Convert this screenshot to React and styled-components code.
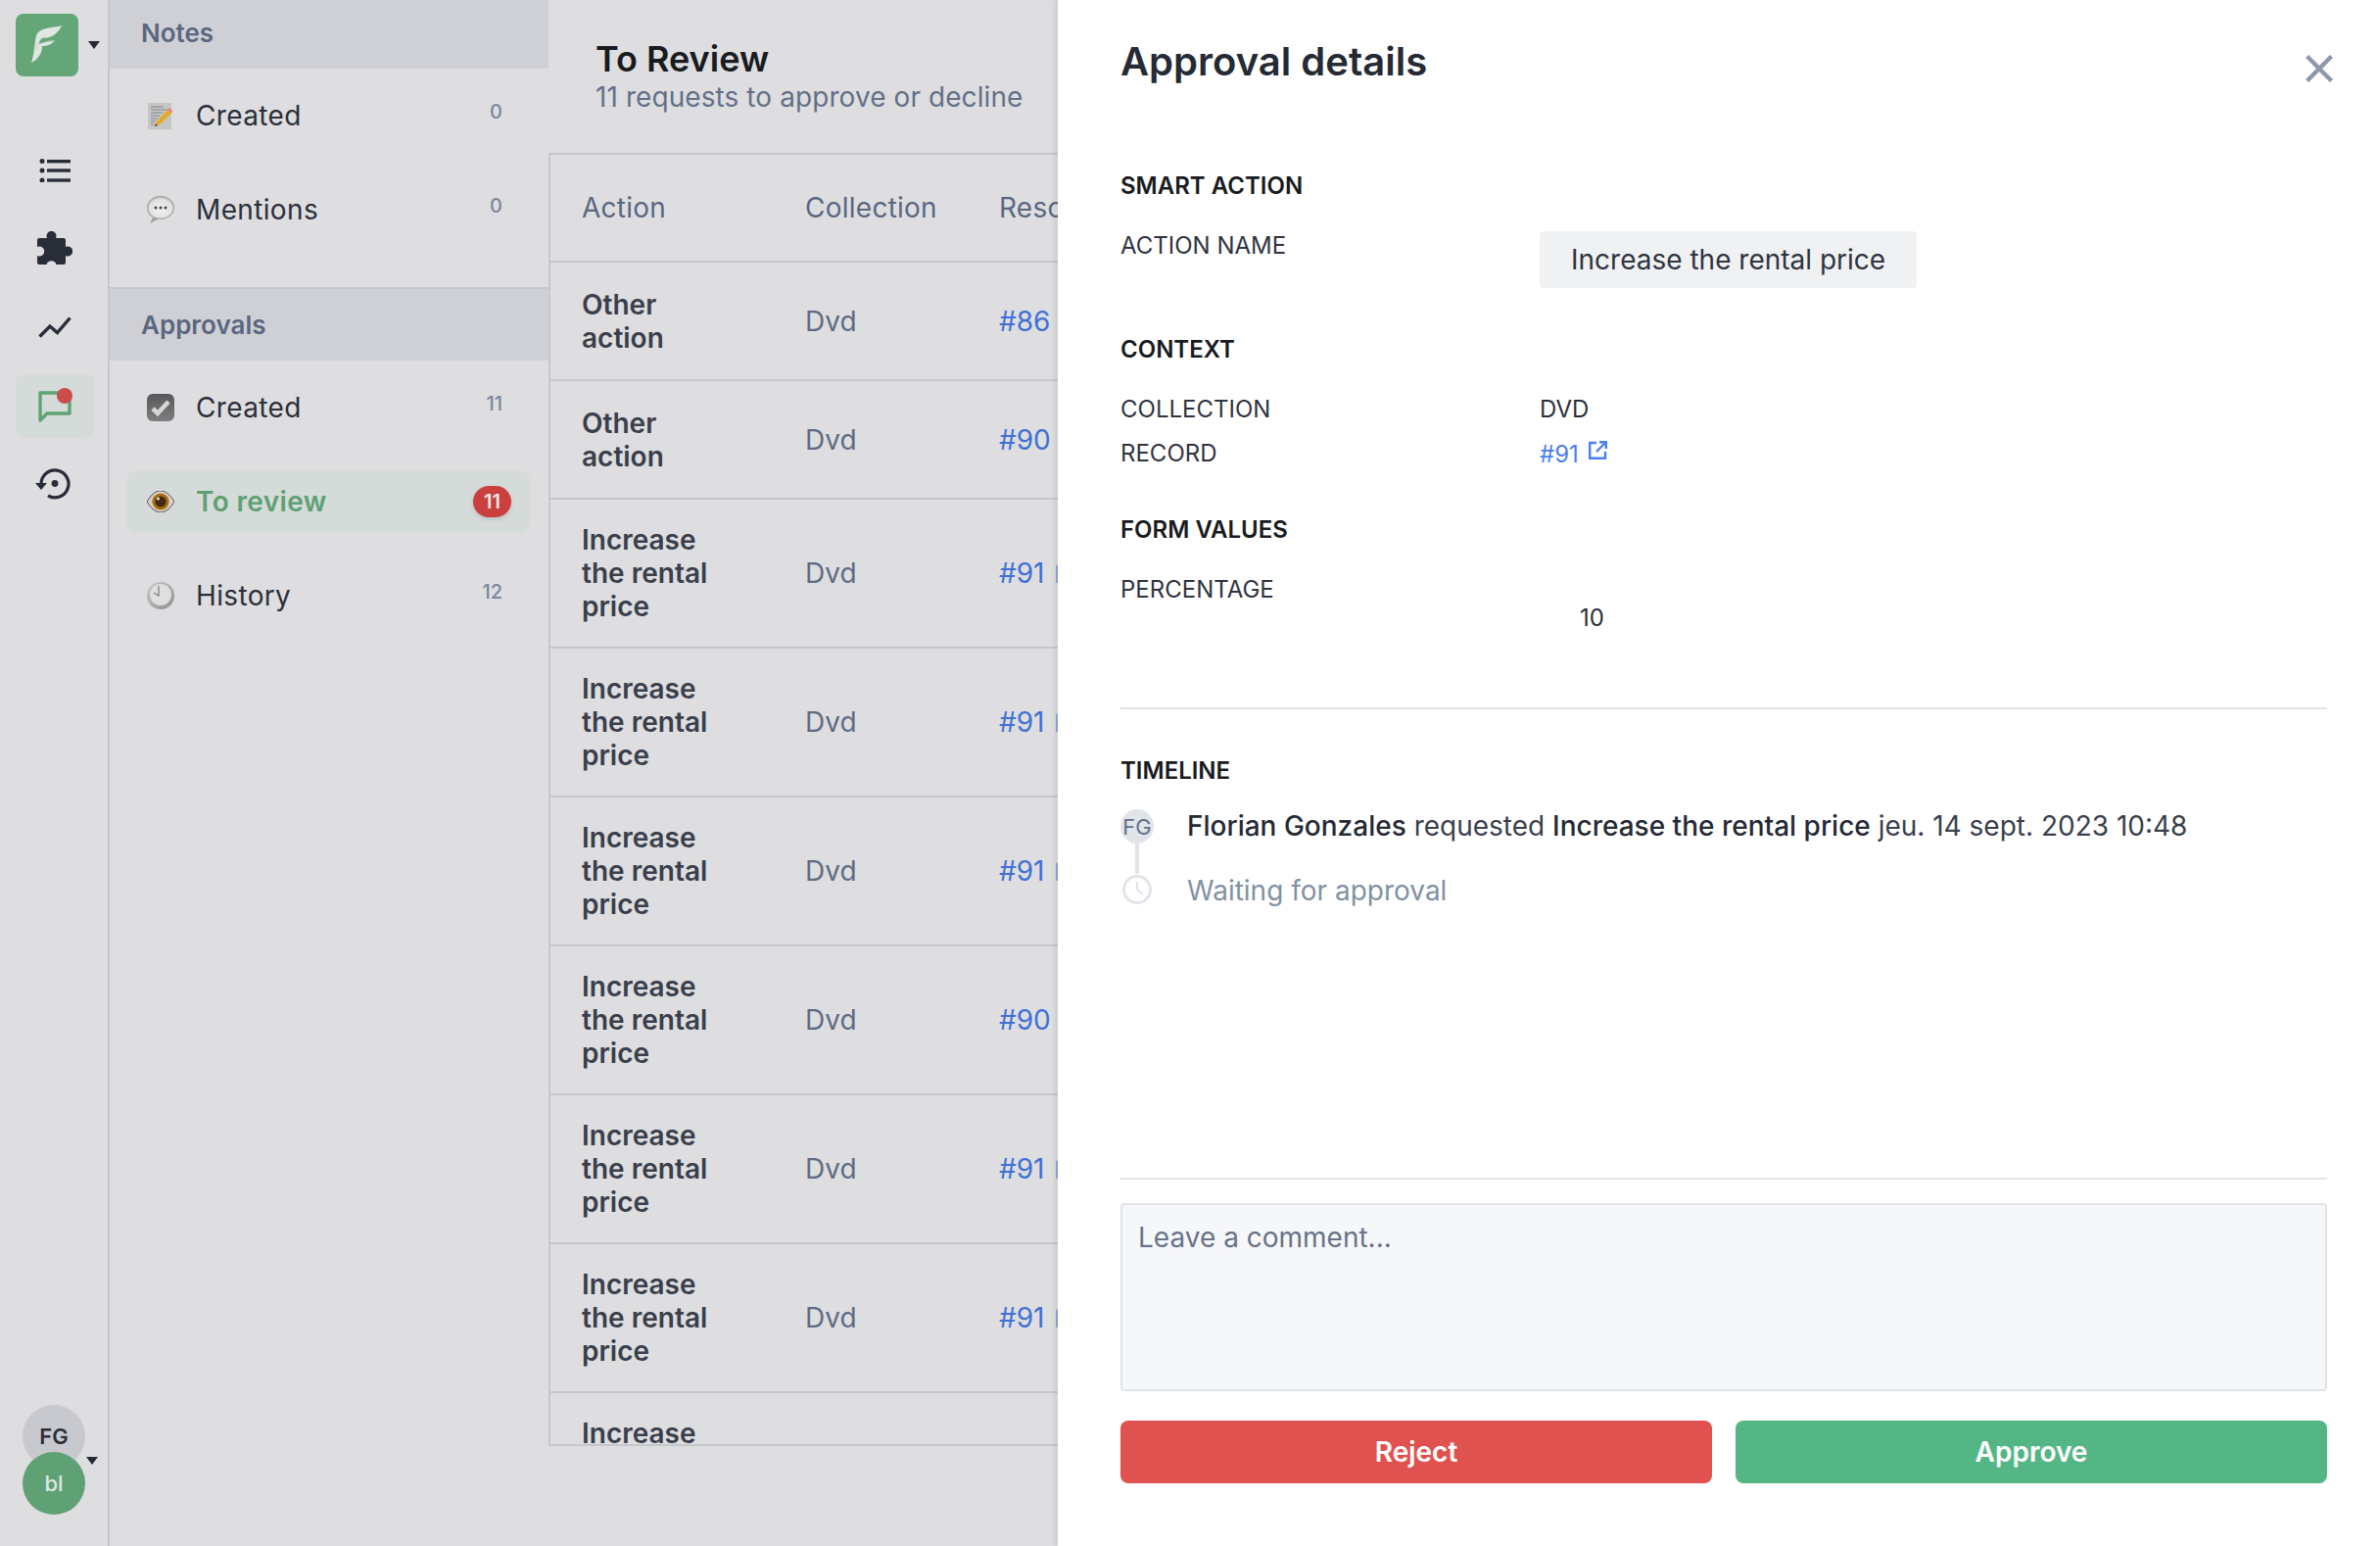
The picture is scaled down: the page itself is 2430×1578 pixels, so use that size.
import React from "react";
import styled, { createGlobalStyle } from "styled-components";

const Global = createGlobalStyle`
  html, body { margin: 0; padding: 0; background: #fff; }
  * { box-sizing: border-box; }
  body { font-family: Inter, "Noto Sans", sans-serif; }
`;

const Page = styled.div`
  display: flex;
  width: 2430px;
  height: 1578px;
  overflow: hidden;
`;

const Rail = styled.nav`
  display: flex;
  flex-direction: column;
  flex: 0 0 112px;
  background: #dedee0;
  border-right: 2px solid #c6c6ce;
  padding: 14px 0 32px 16px;
`;
const LogoRow = styled.div`
  display: flex;
  align-items: center;
  gap: 10px;
  margin-bottom: 64px;
`;
const Logo = styled.div`
  width: 64px;
  height: 64px;
  border-radius: 8px;
  background: #64a678;
  flex: none;
`;
const Caret = styled.span`
  display: block;
  width: 0;
  height: 0;
  border-left: 6.5px solid transparent;
  border-right: 6.5px solid transparent;
  border-top: 8px solid #262a35;
`;
const RailNav = styled.div`
  display: flex;
  flex-direction: column;
  gap: 16px;
`;
const RailItem = styled.div`
  display: flex;
  align-items: center;
  justify-content: center;
  width: 80px;
  height: 64px;
  border-radius: 8px;
  color: #292d38;
  background: ${(p) => (p.$active ? "#d5dbd9" : "transparent")};
`;
const Avatars = styled.div`
  position: relative;
  margin: auto 0 0 7px;
  width: 64px;
`;
const Avatar = styled.div`
  display: flex;
  align-items: center;
  justify-content: center;
  width: 64px;
  height: 64px;
  border-radius: 50%;
  font-size: 22px;
  font-weight: ${(p) => (p.$green ? 500 : 600)};
  color: ${(p) => (p.$green ? "#dfe6e1" : "#2a2e39")};
  background: ${(p) => (p.$green ? "#5fa174" : "#c8c9ce")};
  margin-top: ${(p) => (p.$green ? "-16px" : "0")};
  position: relative;
`;
const AvatarCaret = styled(Caret)`
  position: absolute;
  left: 65px;
  top: 53px;
`;

const Sidebar = styled.aside`
  flex: 0 0 448px;
  background: #dedee0;
`;
const Band = styled.div`
  display: flex;
  align-items: center;
  height: ${(p) => (p.$bordered ? "75px" : "70px")};
  padding: 0 0 ${(p) => (p.$bordered ? "0" : "4px")} 32px;
  background: #cfd0d5;
  font-size: 26px;
  font-weight: 600;
  color: #5a6780;
  border-top: ${(p) => (p.$bordered ? "2px solid #c6c6ce" : "none")};
`;
const Rows = styled.div`
  display: flex;
  flex-direction: column;
  gap: 33px;
  padding: 16px 19px 0 17px;
  height: ${(p) => p.$h};
`;
const Row = styled.div`
  display: flex;
  align-items: center;
  height: 63px;
  padding: 0 20px 0 21px;
  border-radius: 10px;
  background: ${(p) => (p.$active ? "#d5dbd9" : "transparent")};
`;
const RowIcon = styled.span`
  display: flex;
  flex: 0 0 28px;
  justify-content: center;
`;
const RowLabel = styled.span`
  flex: 1;
  margin-left: 22px;
  font-size: 28px;
  letter-spacing: 0.35px;
  font-weight: ${(p) => (p.$active ? 600 : 400)};
  color: ${(p) => (p.$active ? "#5ea173" : "#2b2f3a")};
`;
const Count = styled.span`
  font-size: 20px;
  font-weight: 500;
  color: #7b869b;
  margin: 0 8px 8px 0;
`;
const Badge = styled.span`
  display: flex;
  align-items: center;
  justify-content: center;
  width: 39px;
  height: 32px;
  border-radius: 16px;
  font-size: 20px;
  font-weight: 600;
  color: #f1e6e6;
  background: #c9403f;
  box-shadow: 0 2px 4px rgba(0, 0, 0, 0.12);
  margin-right: -1px;
`;

const Main = styled.main`
  flex: 0 0 520px;
  display: flex;
  flex-direction: column;
  background: #dedee0;
  overflow: hidden;
`;
const MainHeader = styled.header`
  height: 158px;
  padding: 39px 0 0 48px;
  border-bottom: 2px solid #c6c6ce;
`;
const Title = styled.h1`
  margin: 0;
  font-size: 36px;
  line-height: 42px;
  font-weight: 600;
  color: #191b21;
`;
const Subtitle = styled.p`
  margin: 0;
  font-size: 28px;
  line-height: 36px;
  letter-spacing: 0.08px;
  color: #647088;
`;
const TableWrap = styled.div`
  height: 1318px;
  overflow: hidden;
  border-left: 2px solid #c6c6ce;
  border-bottom: 2px solid #c6c6ce;
`;
const Table = styled.table`
  border-collapse: separate;
  border-spacing: 0;
  table-layout: fixed;
  width: 794px;
`;
const Th = styled.th`
  width: ${(p) => p.$w}px;
  height: 110px;
  padding: 0 0 0 ${(p) => p.$pl}px;
  text-align: left;
  font-size: 28px;
  font-weight: 400;
  letter-spacing: 0.25px;
  color: #5a6780;
  border-bottom: 2px solid #c6c6ce;
  white-space: nowrap;
`;
const Td = styled.td`
  height: ${(p) => p.$h}px;
  padding: 0 0 0 ${(p) => p.$pl}px;
  font-size: 28px;
  line-height: 34px;
  border-bottom: 2px solid #c6c6ce;
  color: #5f6b82;
`;
const ActionName = styled.span`
  display: block;
  width: 132px;
  font-weight: 600;
  color: #3a3f4b;
`;
const RecordLink = styled.span`
  display: flex;
  align-items: center;
  gap: 12px;
  color: #4070d6;
`;

const Panel = styled.section`
  position: relative;
  flex: 0 0 1350px;
  display: flex;
  flex-direction: column;
  padding: 39px 54px 64px 64px;
  background: #fff;
  box-shadow: -3px 0 4px rgba(60, 60, 80, 0.1);
  font-size: 24px;
  color: #2b2f3a;
`;
const PanelTitle = styled.h2`
  margin: 0 0 88px;
  font-size: 40px;
  line-height: 48px;
  font-weight: 600;
  color: #252a35;
`;
const Close = styled.svg`
  position: absolute;
  top: 56px;
  right: 48px;
`;
const SectionTitle = styled.h3`
  margin: ${(p) => p.$mt || 0}px 0 ${(p) => p.$mb || 0}px;
  font-size: 24px;
  line-height: 30px;
  font-weight: 600;
  color: #191b21;
`;
const Field = styled.div`
  display: grid;
  grid-template-columns: 428px 1fr;
  margin-top: ${(p) => p.$mt || 0}px;
  line-height: 28px;
`;
const FieldLabel = styled.div`
  padding-top: ${(p) => p.$pt || 0}px;
  color: #2f3440;
`;
const Chip = styled.div`
  justify-self: start;
  display: flex;
  align-items: center;
  height: 58px;
  padding: 0 32px;
  border-radius: 4px;
  background: #f0f1f3;
  font-size: 28px;
  color: #2f3440;
`;
const FieldLink = styled.div`
  display: flex;
  align-items: flex-start;
  gap: 10px;
  padding-top: 1px;
  color: #4a7ff0;
`;
const NumberValue = styled.div`
  margin: 29px 0 0 41px;
`;
const Divider = styled.hr`
  margin: ${(p) => p.$mt}px 0 ${(p) => p.$mb}px;
  border: none;
  height: 2px;
  background: #e1e4e8;
`;
const Timeline = styled.div`
  display: grid;
  grid-template-columns: 34px 1fr;
  column-gap: 34px;
  margin-top: 24px;
  font-size: 28px;
  line-height: 34px;
`;
const FgDot = styled.div`
  display: flex;
  align-items: center;
  justify-content: center;
  width: 34px;
  height: 35px;
  border-radius: 50%;
  background: #e1e4e9;
  font-size: 22px;
  color: #64708a;
`;
const TimelineMarks = styled.div`
  display: flex;
  flex-direction: column;
  align-items: center;
`;
const Connector = styled.div`
  width: 4px;
  height: 31px;
  background: #e1e4e9;
`;
const TimelineText = styled.div`
  color: ${(p) => (p.$muted ? "#8291a5" : "#3a3f4b")};
  margin-top: ${(p) => p.$mt || 0}px;
  white-space: nowrap;
`;
const Strong = styled.span`
  font-weight: 500;
  color: #252a35;
`;
const Footer = styled.div`
  margin-top: auto;
`;
const Comment = styled.textarea`
  display: block;
  width: 100%;
  height: 192px;
  padding: 16px;
  border: 2px solid #e1e4e8;
  border-radius: 4px;
  background: #f6f7f9;
  font-family: inherit;
  font-size: 28px;
  line-height: 34px;
  resize: none;
  outline: none;
  &::placeholder { color: #687389; opacity: 1; }
`;
const Buttons = styled.div`
  display: grid;
  grid-template-columns: 1fr 1fr;
  gap: 24px;
  margin-top: 30px;
`;
const Button = styled.button`
  height: 64px;
  border: none;
  border-radius: 8px;
  font-family: inherit;
  font-size: 28px;
  font-weight: 600;
  color: #fff;
  background: ${(p) => (p.$kind === "reject" ? "#df524f" : "#55b685")};
`;

const FeatherF = () => (
  <svg width="64" height="64" viewBox="0 0 64 64">
    <path fill="#e0e6e1" d="M47 12C38 15 28 13 22 20c-3 6-2 18-6 30 6-3 10-8 11-15v-2c6 0 10-2 13-6-6 2-12 2-16 4 0-3 1-5 3-6 9 0 16-4 20-13z" />
    <path fill="none" stroke="#b9cfbd" strokeWidth="0.8" d="M21 38c1-7 3-12 9-15M24 31c4-2 8-2 12-4" />
  </svg>
);
const ListIcon = () => (
  <svg width="32" height="24" viewBox="0 0 32 24" fill="#292d38">
    <circle cx="3" cy="2.5" r="2.5" /><circle cx="3" cy="12" r="2.5" /><circle cx="3" cy="22" r="2.5" />
    <rect x="8" y="1" width="24" height="3.4" /><rect x="8" y="10.3" width="24" height="3.4" /><rect x="8" y="20.3" width="24" height="3.4" />
  </svg>
);
const PuzzleIcon = () => (
  <svg width="36" height="36" viewBox="0 0 36 36" fill="#292d38">
    <path d="M2 7H10A5 5 0 1 1 19 7H27A2 2 0 0 1 29 9V16A5 5 0 1 1 29 25V32A2 2 0 0 1 27 34H19.5A5.2 5.2 0 0 0 9.5 34H2A2 2 0 0 1 0 32V25A5 5 0 1 0 0 16V9A2 2 0 0 1 2 7Z" />
  </svg>
);
const ChartIcon = () => (
  <svg width="34" height="22" viewBox="0 0 34 22" fill="none" stroke="#292d38" strokeWidth="3.4">
    <path d="M1.5 20.5L12 10l7.5 6.5L32.5 1.5" />
  </svg>
);
const MessageIcon = () => (
  <svg width="36" height="36" viewBox="0 0 36 36">
    <path d="M3 5H33V26H10L3 33Z" fill="none" stroke="#5fa374" strokeWidth="3.4" strokeLinejoin="round" />
    <circle cx="28" cy="8" r="8" fill="#cc4c4c" />
  </svg>
);
const HistoryIcon = () => (
  <svg width="40" height="32" viewBox="0 0 40 32" fill="none">
    <path d="M6 16A14 14 0 1 1 13 28" stroke="#292d38" strokeWidth="3.2" />
    <path d="M0 15h12l-6 7z" fill="#292d38" />
    <circle cx="20" cy="15.5" r="3.4" fill="#292d38" />
  </svg>
);
const MemoIcon = () => (
  <svg width="26" height="28" viewBox="0 0 26 28">
    <rect x="0" y="1" width="24" height="27" fill="#c6c6c7" />
    <path stroke="#7f7f82" strokeWidth="0.9" d="M3 5h13M3 8h17M3 11h12M3 14h9M3 17h7M3 20h5M3 23h3" />
    <path fill="#e6aa2a" d="M7 25l2-5L20 8l4 4-12 11z" />
    <path fill="#3a3a3a" d="M7 25l1-3 2 2z" />
    <path fill="#d9838a" d="M20 8l2-2 3 3-1 3z" />
  </svg>
);
const BubbleIcon = () => (
  <svg width="28" height="28" viewBox="0 0 28 28">
    <defs>
      <radialGradient id="bub" cx="0.5" cy="0.55" r="0.6">
        <stop offset="0" stopColor="#f1f1f1" /><stop offset="0.7" stopColor="#e2e2e3" /><stop offset="1" stopColor="#a6a6a9" />
      </radialGradient>
    </defs>
    <path d="M7 20l-4 8 10-5z" fill="#a0a0a3" />
    <ellipse cx="14" cy="12" rx="13.4" ry="11.4" fill="url(#bub)" stroke="#a6a6a9" strokeWidth="1.2" />
    <circle cx="9" cy="12" r="1.5" fill="#444" /><circle cx="14" cy="12" r="1.5" fill="#444" /><circle cx="19" cy="12" r="1.5" fill="#444" />
  </svg>
);
const CheckIcon = () => (
  <svg width="28" height="28" viewBox="0 0 28 28">
    <defs>
      <linearGradient id="chk" x1="0" y1="0" x2="0" y2="1">
        <stop offset="0" stopColor="#58585a" /><stop offset="1" stopColor="#7e7e80" />
      </linearGradient>
    </defs>
    <rect width="28" height="28" rx="6" fill="url(#chk)" />
    <path d="M6 15l5 5L22 8" fill="none" stroke="#d6d6d7" strokeWidth="4.6" />
  </svg>
);
const EyeIcon = () => (
  <svg width="28" height="22" viewBox="0 0 28 22">
    <path d="M0 11C5 3 9 0 14 0s10 4 14 11c-4 7-9 11-14 11S4 18 0 11z" fill="#d8cfcf" stroke="#5a4a46" strokeWidth="1" />
    <circle cx="14" cy="11" r="8.6" fill="#a5720f" />
    <circle cx="14" cy="11" r="5.6" fill="#45280f" />
    <circle cx="11.5" cy="8" r="1.6" fill="#e8e0d8" />
  </svg>
);
const ClockEmoji = () => (
  <svg width="28" height="28" viewBox="0 0 28 28">
    <defs>
      <linearGradient id="clk" x1="0" y1="0" x2="1" y2="1">
        <stop offset="0" stopColor="#c8c8ca" /><stop offset="1" stopColor="#8f8f92" />
      </linearGradient>
    </defs>
    <circle cx="14" cy="14" r="14" fill="url(#clk)" />
    <circle cx="14" cy="13" r="11" fill="#dfdfe0" />
    <path d="M12 4v10l-5-3" fill="none" stroke="#7c7c80" strokeWidth="1.2" />
  </svg>
);
const ExternalIcon = ({ size = 19, color = "#4a7ff0", w = 2.4 }) => (
  <svg width={size} height={size} viewBox="0 0 19 19" fill="none" stroke={color} strokeWidth={w}>
    <path d="M8 2H1.2v15.8H17V11" />
    <path d="M8 11L17.5 1.5M11 1.2h6.8V8" />
  </svg>
);
const WaitClock = () => (
  <svg width="32" height="32" viewBox="0 0 32 32" fill="none" stroke="#e1e4e9" strokeWidth="3">
    <circle cx="16" cy="16" r="13.5" />
    <path d="M16 8v8l6 5" strokeWidth="2" />
  </svg>
);
const CloseIcon = () => (
  <Close width="28" height="28" viewBox="0 0 28 28" fill="none" stroke="#8d99a8" strokeWidth="4.4">
    <path d="M1.5 1.5l25 25M26.5 1.5l-25 25" />
  </Close>
);

const rows = [
  ["Other action", 2, "#86"],
  ["Other action", 2, "#90"],
  ["Increase the rental price", 3, "#91"],
  ["Increase the rental price", 3, "#91"],
  ["Increase the rental price", 3, "#91"],
  ["Increase the rental price", 3, "#90"],
  ["Increase the rental price", 3, "#91"],
  ["Increase the rental price", 3, "#91"],
  ["Increase the rental price", 3, "#91"],
];

export default function App() {
  return (
    <Page>
      <Global />
      <Rail>
        <LogoRow>
          <Logo><FeatherF /></Logo>
          <Caret />
        </LogoRow>
        <RailNav>
          <RailItem><ListIcon /></RailItem>
          <RailItem><PuzzleIcon /></RailItem>
          <RailItem><ChartIcon /></RailItem>
          <RailItem $active><MessageIcon /></RailItem>
          <RailItem><HistoryIcon /></RailItem>
        </RailNav>
        <Avatars>
          <Avatar>FG</Avatar>
          <Avatar $green>bl</Avatar>
          <AvatarCaret />
        </Avatars>
      </Rail>
      <Sidebar>
        <Band>Notes</Band>
        <Rows $h="223px">
          <Row><RowIcon><MemoIcon /></RowIcon><RowLabel>Created</RowLabel><Count>0</Count></Row>
          <Row><RowIcon><BubbleIcon /></RowIcon><RowLabel>Mentions</RowLabel><Count>0</Count></Row>
        </Rows>
        <Band $bordered>Approvals</Band>
        <Rows>
          <Row><RowIcon><CheckIcon /></RowIcon><RowLabel>Created</RowLabel><Count>11</Count></Row>
          <Row $active><RowIcon><EyeIcon /></RowIcon><RowLabel $active>To review</RowLabel><Badge>11</Badge></Row>
          <Row><RowIcon><ClockEmoji /></RowIcon><RowLabel>History</RowLabel><Count>12</Count></Row>
        </Rows>
      </Sidebar>
      <Main>
        <MainHeader>
          <Title>To Review</Title>
          <Subtitle>11 requests to approve or decline</Subtitle>
        </MainHeader>
        <TableWrap>
          <Table>
            <thead>
              <tr>
                <Th $w={260} $pl={32}>Action</Th>
                <Th $w={198} $pl={0}>Collection</Th>
                <Th $w={336} $pl={0}>Resource</Th>
              </tr>
            </thead>
            <tbody>
              {rows.map(([name, lines, rec], i) => {
                const h = lines === 2 ? 121 : 152;
                return (
                  <tr key={i}>
                    <Td $h={h} $pl={32}><ActionName>{name}</ActionName></Td>
                    <Td $h={h} $pl={0}>Dvd</Td>
                    <Td $h={h} $pl={0}>
                      <RecordLink>{rec}<ExternalIcon color="#8fa6d6" /></RecordLink>
                    </Td>
                  </tr>
                );
              })}
            </tbody>
          </Table>
        </TableWrap>
      </Main>
      <Panel>
        <PanelTitle>Approval details</PanelTitle>
        <CloseIcon />
        <SectionTitle>SMART ACTION</SectionTitle>
        <Field $mt={31}>
          <FieldLabel $pt={1}>ACTION NAME</FieldLabel>
          <Chip>Increase the rental price</Chip>
        </Field>
        <SectionTitle $mt={48}>CONTEXT</SectionTitle>
        <Field $mt={32}>
          <FieldLabel>COLLECTION</FieldLabel>
          <div>DVD</div>
        </Field>
        <Field $mt={17}>
          <FieldLabel>RECORD</FieldLabel>
          <FieldLink>#91<ExternalIcon /></FieldLink>
        </Field>
        <SectionTitle $mt={48}>FORM VALUES</SectionTitle>
        <Field $mt={32}>
          <FieldLabel>PERCENTAGE</FieldLabel>
          <NumberValue>10</NumberValue>
        </Field>
        <Divider $mt={77} $mb={48} />
        <SectionTitle>TIMELINE</SectionTitle>
        <Timeline>
          <TimelineMarks>
            <FgDot>FG</FgDot>
            <Connector />
            <WaitClock />
          </TimelineMarks>
          <div>
            <TimelineText>
              <Strong>Florian Gonzales</Strong> requested <Strong>Increase the rental price</Strong> jeu. 14 sept. 2023 10:48
            </TimelineText>
            <TimelineText $muted $mt={32}>Waiting for approval</TimelineText>
          </div>
        </Timeline>
        <Footer>
          <Divider $mt={0} $mb={24} />
          <Comment placeholder="Leave a comment..." />
          <Buttons>
            <Button $kind="reject">Reject</Button>
            <Button $kind="approve">Approve</Button>
          </Buttons>
        </Footer>
      </Panel>
    </Page>
  );
}
